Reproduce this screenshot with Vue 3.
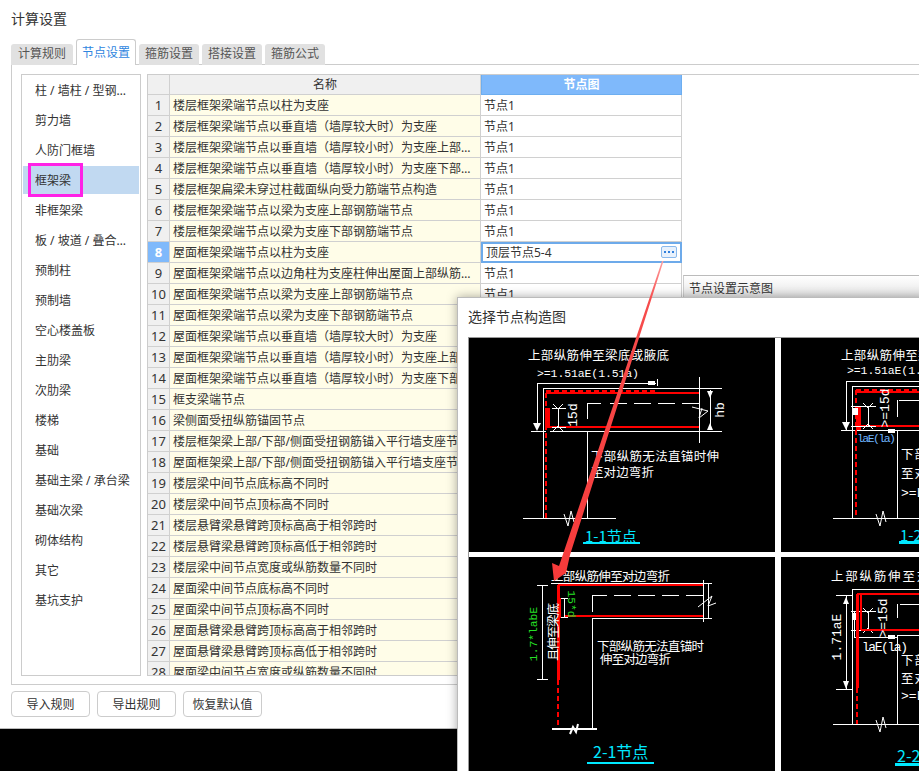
<script setup>
const tabs = ['计算规则', '节点设置', '箍筋设置', '搭接设置', '箍筋公式']

const categories = [
  '柱 / 墙柱 / 型钢混凝土柱',
  '剪力墙',
  '人防门框墙',
  '框架梁',
  '非框架梁',
  '板 / 坡道 / 叠合板（整厚）',
  '预制柱',
  '预制墙',
  '空心楼盖板',
  '主肋梁',
  '次肋梁',
  '楼梯',
  '基础',
  '基础主梁 / 承台梁',
  '基础次梁',
  '砌体结构',
  '其它',
  '基坑支护',
]

const rows = [
  '楼层框架梁端节点以柱为支座',
  '楼层框架梁端节点以垂直墙（墙厚较大时）为支座',
  '楼层框架梁端节点以垂直墙（墙厚较小时）为支座上部钢筋端节点',
  '楼层框架梁端节点以垂直墙（墙厚较小时）为支座下部钢筋端节点',
  '楼层框架扁梁未穿过柱截面纵向受力筋端节点构造',
  '楼层框架梁端节点以梁为支座上部钢筋端节点',
  '楼层框架梁端节点以梁为支座下部钢筋端节点',
  '屋面框架梁端节点以柱为支座',
  '屋面框架梁端节点以边角柱为支座柱伸出屋面上部纵筋端节点',
  '屋面框架梁端节点以梁为支座上部钢筋端节点',
  '屋面框架梁端节点以梁为支座下部钢筋端节点',
  '屋面框架梁端节点以垂直墙（墙厚较大时）为支座',
  '屋面框架梁端节点以垂直墙（墙厚较小时）为支座上部钢筋端节点',
  '屋面框架梁端节点以垂直墙（墙厚较小时）为支座下部钢筋端节点',
  '框支梁端节点',
  '梁侧面受扭纵筋锚固节点',
  '楼层框架梁上部/下部/侧面受扭钢筋锚入平行墙支座节点',
  '屋面框架梁上部/下部/侧面受扭钢筋锚入平行墙支座节点',
  '楼层梁中间节点底标高不同时',
  '楼层梁中间节点顶标高不同时',
  '楼层悬臂梁悬臂跨顶标高高于相邻跨时',
  '楼层悬臂梁悬臂跨顶标高低于相邻跨时',
  '楼层梁中间节点宽度或纵筋数量不同时',
  '屋面梁中间节点底标高不同时',
  '屋面梁中间节点顶标高不同时',
  '屋面悬臂梁悬臂跨顶标高高于相邻跨时',
  '屋面悬臂梁悬臂跨顶标高低于相邻跨时',
  '屋面梁中间节点宽度或纵筋数量不同时',
]

const buttons = ['导入规则', '导出规则', '恢复默认值']
</script>

<template>
  <div class="page">
    <div class="window">
      <div class="title">计算设置</div>

      <div class="tabs">
        <div v-for="(tab, i) in tabs" :key="tab" class="tab" :class="{ active: i === 1 }">{{ tab }}</div>
      </div>

      <div class="panel">
        <ul class="list">
          <li v-for="(name, i) in categories" :key="name" :class="{ selected: i === 3 }">
            <span class="list-text">{{ name }}</span>
            <i v-if="i === 3" class="mark"></i>
          </li>
        </ul>

        <div class="grid-wrap">
          <table class="grid">
            <colgroup>
              <col style="width: 22px" />
              <col style="width: 311px" />
              <col style="width: 201px" />
            </colgroup>
            <thead>
              <tr>
                <th></th>
                <th>名称</th>
                <th class="th-active">节点图</th>
              </tr>
            </thead>
            <tbody>
              <tr v-for="(name, i) in rows" :key="i">
                <td class="num" :class="{ 'num-active': i === 7 }">{{ i + 1 }}</td>
                <td class="name">{{ name }}</td>
                <td v-if="i === 7" class="val editing">
                  <span>顶层节点5-4</span>
                  <button class="more" type="button"><b></b><b></b><b></b></button>
                </td>
                <td v-else class="val">节点1</td>
              </tr>
            </tbody>
          </table>
        </div>
      </div>

      <div class="actions">
        <button v-for="b in buttons" :key="b" class="btn" type="button">{{ b }}</button>
      </div>
    </div>

    <div class="preview">节点设置示意图</div>

    <div class="dialog">
      <div class="dialog-title">选择节点构造图</div>
      <div class="cards">
        <!-- 1-1 -->
        <svg class="card" viewBox="469 338 306 214">
          <text class="cn" x="528" y="360" textLength="141">上部纵筋伸至梁底或腋底</text>
          <text class="mono" x="537" y="377" textLength="102">&gt;=1.51aE(1.51a)</text>
          <polyline class="ln" points="537,429 537,383 656,383" />
          <path class="ln" d="M657 379V386M531 431H546M543 518V388H722M699 377V443M550 431H722M587 431V518M523 518H616M587 419V403H601" />
          <rect class="fill" x="648" y="381" width="7" height="4" />
          <polygon class="fill" points="533,423 541,423 537,431" />
          <path class="ln dash" d="M610 403H699" />
          <path class="rd" d="M546 393H699M547 427H699" />
          <path class="rd dashed" d="M546 393V518M546 391H655" />
          <rect class="red-fill" x="545" y="408" width="5" height="19" />
          <path class="ln" d="M552 408H566M552 427H566M558 408V427M553 404L558 409L563 404M553 431L558 426L563 431" />
          <text class="mono big" transform="rotate(-90 573 415)" x="573" y="415">15d</text>
          <path class="ln" d="M710 390V430" />
          <polygon class="fill" points="707,391 713,391 710,398" />
          <polygon class="fill" points="707,430 713,430 710,423" />
          <path class="thin" d="M692 407L708 411L699 418L702 408" />
          <text class="mono big" transform="rotate(-90 720 410)" x="720" y="410">hb</text>
          <text class="cn" x="591" y="461" textLength="128">下部纵筋无法直锚时伸</text>
          <text class="cn" x="591" y="477" textLength="63">至对边弯折</text>
          <path class="thin" d="M564 514L568 526L571 511L574 522" />
          <text class="cyan" x="585" y="542">1-1节点</text>
          <rect class="cyan-fill" x="583" y="542" width="57" height="2" />
        </svg>

        <!-- 1-2 -->
        <svg class="card" viewBox="781 338 306 214">
          <text class="cn" x="841" y="360" textLength="141">上部纵筋伸至梁底或腋底</text>
          <text class="mono" x="847" y="374" textLength="102">&gt;=1.51aE(1.51a)</text>
          <path class="ln" d="M846 430V381H1000M852 518V386H1000M841 430H1000M897 431V518M833 518H940M897 417V400M899 400H919" />
          <polygon class="fill" points="842,422 850,422 846,430" />
          <path class="rd dashed" d="M856 390V518M856 390H1000" />
          <path class="rd" d="M857 392H1000M860 426H1000" />
          <rect class="red-fill" x="856" y="406" width="5" height="24" />
          <path class="ln" d="M851 406H876M851 426H876M868 406V426M863 403L868 408L873 403M863 429L868 424L873 429" />
          <rect class="fill" x="853" y="408" width="5" height="7" />
          <rect class="fill" x="888" y="429" width="7" height="4" />
          <text class="mono big" transform="rotate(-90 885 408)" x="885" y="408">&gt;=15d</text>
          <text class="mono blue" x="857" y="442" textLength="39">laE(la)</text>
          <text class="cn" x="901" y="459" textLength="26">下部</text>
          <text class="cn" x="901" y="478" textLength="26">至对</text>
          <text class="mono big" x="901" y="497">&gt;=L</text>
          <path class="thin" d="M876 514L880 526L883 511L886 522" />
          <text class="cyan" x="900" y="541">1-2节点</text>
          <rect class="cyan-fill" x="899" y="541" width="60" height="3" />
        </svg>

        <!-- 2-1 -->
        <svg class="card" viewBox="469 557 306 214">
          <text class="cn" x="551" y="581" textLength="119">上部纵筋伸至对边弯折</text>
          <path class="ln" d="M551 583H704M703 580V622M708 583V618M703 583H712M703 618H712M592 612V595H607M592 618V728M592 618H703M537 585H548M537 679H548M542 585V679M560 598H568M560 617H568M564 598V617" />
          <path class="ln dash" d="M614 595H703" />
          <path class="rd" d="M558 585H703M565 616H703" />
          <path class="rd3" d="M558 585V680" />
          <rect class="red-fill" x="558" y="598" width="3" height="20" />
          <path class="rd dashed" d="M558 680V728" />
          <path class="base" d="M552 729H597" />
          <path class="thin" d="M698 607L712 596L708 606L716 603" />
          <path class="thin2" d="M570 734L573 727L576 732L578 724" />
          <text class="cn rot" transform="rotate(-90 552 632)" x="552" y="632" textLength="58">且伸至梁底</text>
          <text class="mono green" transform="rotate(-90 534 634)" x="534" y="634">1.7*labE</text>
          <text class="mono green" transform="rotate(90 571 604)" x="571" y="604">15*d</text>
          <text class="cn" x="597" y="651" textLength="107">下部纵筋无法直锚时</text>
          <text class="cn" x="600" y="664" textLength="71">伸至对边弯折</text>
          <text class="cyan big-cyan" x="593" y="758">2-1节点</text>
          <rect class="cyan-fill" x="587" y="762" width="67" height="2" />
        </svg>

        <!-- 2-2 -->
        <svg class="card" viewBox="781 557 306 214">
          <text class="cn" x="831" y="581" textLength="141">上部纵筋伸至对边弯折</text>
          <path class="ln" d="M852 724V589H1000M836 595H852M836 689H852M846 596V689M854 611V637H897M897 635V724M897 635H1000M897 618V604M900 604H1000M833 724H940M851 611H876M851 630H876M868 611V630M863 608L868 613L873 608M863 633L868 628L873 633" />
          <polygon class="fill" points="843,604 849,604 846,597" />
          <polygon class="fill" points="843,681 849,681 846,689" />
          <rect class="fill" x="888" y="635" width="7" height="4" />
          <rect class="fill" x="853" y="613" width="5" height="7" />
          <path class="rd" d="M857 594H1000M861 630H1000M861 594V630" />
          <path class="rd3" d="M857 594V688" />
          <path class="rd dashed" d="M857 688V724" />
          <text class="mono big" transform="rotate(-90 837 637)" x="837" y="637">1.71aE</text>
          <text class="mono big" transform="rotate(-90 883 618)" x="883" y="618">&gt;=15d</text>
          <text class="mono big" x="862" y="651" textLength="46">laE(la)</text>
          <text class="cn" x="901" y="665" textLength="26">下部</text>
          <text class="cn" x="901" y="683" textLength="26">至对</text>
          <text class="mono big" x="901" y="700">&gt;=L</text>
          <path class="thin" d="M876 720L880 732L883 717L886 728" />
          <text class="cyan big-cyan" x="897" y="762">2-2节点</text>
          <rect class="cyan-fill" x="895" y="763" width="65" height="3" />
        </svg>
      </div>
    </div>

    <svg class="pointer" viewBox="0 0 919 771">
      <defs>
        <linearGradient id="fade" x1="0" y1="0" x2="0" y2="1">
          <stop offset="0" stop-color="#ffa0a0" />
          <stop offset="0.12" stop-color="#f64c4c" />
          <stop offset="1" stop-color="#f73a3a" />
        </linearGradient>
      </defs>
      <polygon fill="url(#fade)" points="662,261 663.5,261 570,555 566,573 554,581 552,563 559,566" />
    </svg>
  </div>
</template>

<style scoped>
.page {
  position: relative;
  width: 919px;
  height: 771px;
  overflow: hidden;
  background: #000;
  color: #333;
  font-family: 'Noto Sans', 'Noto Sans CJK SC', sans-serif;
  font-size: 12px;
}
.window {
  height: 729px;
  box-sizing: border-box;
  background: #fff;
  border-bottom: 1px solid #bbb;
}
.title {
  height: 39px;
  padding-left: 11px;
  font-size: 14px;
  line-height: 38px;
}
.tabs {
  display: flex;
  align-items: flex-end;
  gap: 3px;
  height: 26px;
  margin-bottom: -1px;
  margin-left: 11px;
  position: relative;
}
.tab {
  width: 60px;
  height: 21px;
  box-sizing: border-box;
  background: #e1e1e1;
  border-radius: 3px 3px 0 0;
  text-align: center;
  line-height: 20px;
  color: #555;
}
.tab:first-child {
  width: 62px;
}
.tab.active {
  height: 26px;
  padding-top: 3px;
  background: #fff;
  border: 1px solid #ccc;
  border-bottom: none;
  color: #2f86e0;
  line-height: 20px;
}
.panel {
  display: flex;
  gap: 6px;
  height: 621px;
  box-sizing: border-box;
  margin-left: 11px;
  padding: 9px 0 8px 9px;
  border: 1px solid #ccc;
  border-right: none;
}
.list {
  display: flex;
  flex-direction: column;
  gap: 2px;
  width: 120px;
  flex: none;
  box-sizing: border-box;
  margin: 0;
  padding: 1px 1px 0;
  list-style: none;
  border: 1px solid #ccc;
}
.list li {
  position: relative;
  height: 28px;
  padding-left: 12px;
  line-height: 29px;
}
.list-text {
  display: block;
  width: 97px;
  overflow: hidden;
  white-space: nowrap;
  text-overflow: ellipsis;
}
.list li.selected {
  background: #c1d9f1;
}
.mark {
  position: absolute;
  left: 5px;
  top: -3px;
  width: 55px;
  height: 34px;
  box-sizing: border-box;
  border: 3px solid #ff22e6;
}
.grid-wrap {
  flex: 1;
  overflow: hidden;
  border: 1px solid #ccc;
  border-right: none;
}
.grid {
  table-layout: fixed;
  width: 534px;
  border-collapse: separate;
  border-spacing: 0;
}
.grid th,
.grid td {
  box-sizing: border-box;
  padding: 0;
  border-right: 1px solid #d0d0d0;
  border-bottom: 1px solid #d0d0d0;
  font-weight: normal;
  white-space: nowrap;
  line-height: 19px;
}
.grid th {
  height: 20px;
  background: #f0f0f0;
  text-align: center;
}
.grid .th-active {
  background: #7fb9fb;
  border: 1px solid #6daef0;
  border-top: none;
  color: #fff;
  font-weight: bold;
}
.grid td {
  height: 21px;
}
.num {
  background: #f0f0f0;
  text-align: center;
  font-size: 13px;
}
.grid .num-active {
  background: #7fb9fb;
  color: #fff;
  font-weight: bold;
}
.name {
  padding: 0 3px !important;
  background: #fffde8;
  overflow: hidden;
  text-overflow: ellipsis;
}
.val {
  padding: 0 3px !important;
  background: #fff;
}
.grid .editing {
  position: relative;
  padding-left: 3px !important;
  border: 2px solid #6daaea;
  line-height: 17px;
}
.more {
  position: absolute;
  right: 3px;
  top: 2px;
  display: flex;
  align-items: center;
  justify-content: center;
  gap: 2px;
  width: 16px;
  height: 12px;
  padding: 0;
  background: #e8f1fc;
  border: 1px solid #8ab9ec;
  border-radius: 2px;
}
.more b {
  width: 2px;
  height: 2px;
  background: #2f7fdc;
}
.actions {
  display: flex;
  gap: 7px;
  padding: 6px 0 0 11px;
}
.btn {
  width: 79px;
  height: 26px;
  padding: 0;
  background: #fff;
  border: 1px solid #ccc;
  border-radius: 4px;
  color: #333;
  font: inherit;
}
.preview {
  position: absolute;
  left: 683px;
  top: 275px;
  width: 236px;
  height: 22px;
  box-sizing: border-box;
  padding-left: 5px;
  background: linear-gradient(#fff, #e6e6e6);
  border-top: 1px solid #bbb;
  border-left: 1px solid #ccc;
  line-height: 25px;
}
.dialog {
  position: absolute;
  left: 457px;
  top: 297px;
  width: 470px;
  height: 480px;
  box-sizing: border-box;
  padding-left: 10px;
  background: #fff;
  border: 1px solid #bbb;
  box-shadow: 0 0 10px rgba(0, 0, 0, 0.35);
}
.dialog-title {
  height: 39px;
  font-size: 14px;
  line-height: 38px;
}
.cards {
  display: grid;
  grid-template-columns: 306px 306px;
  grid-auto-rows: 214px;
  gap: 5px 6px;
  width: 620px;
  border-top: 1px solid #999;
  border-left: 1px solid #999;
}
.card {
  display: block;
  width: 306px;
  height: 214px;
  background: #000;
}
.ln,
.thin {
  fill: none;
  stroke: #fff;
  stroke-width: 1;
  shape-rendering: crispEdges;
}
.thin {
  shape-rendering: auto;
}
.thin2 {
  fill: none;
  stroke: #fff;
  stroke-width: 2;
}
.base {
  stroke: #fff;
  stroke-width: 2;
  shape-rendering: crispEdges;
}
.dash {
  stroke-dasharray: 17 7;
}
.rd {
  fill: none;
  stroke: #f00;
  stroke-width: 2;
  shape-rendering: crispEdges;
}
.rd3 {
  fill: none;
  stroke: #f00;
  stroke-width: 3;
  shape-rendering: crispEdges;
}
.dashed {
  stroke-dasharray: 5 3;
}
.fill {
  fill: #fff;
}
.red-fill {
  fill: #f00;
}
.cn {
  fill: #fff;
  font-family: 'Noto Sans CJK SC', sans-serif;
  font-size: 12.5px;
}
.mono {
  fill: #fff;
  font-family: 'Liberation Mono', monospace;
  font-size: 11.5px;
}
.big {
  font-size: 13px;
  text-anchor: start;
}
.mono[transform],
.rot {
  text-anchor: middle;
  dominant-baseline: central;
}
.green {
  fill: #27e027;
  font-size: 11.3px;
}
.blue {
  fill: #6fb6ff;
}
.cyan {
  fill: #00e8ff;
  font-family: 'Noto Sans CJK SC', sans-serif;
  font-size: 15px;
}
.big-cyan {
  font-size: 16px;
}
.cyan-fill {
  fill: #00e8ff;
}
.pointer {
  position: absolute;
  left: 0;
  top: 0;
  width: 919px;
  height: 771px;
  pointer-events: none;
}
</style>
